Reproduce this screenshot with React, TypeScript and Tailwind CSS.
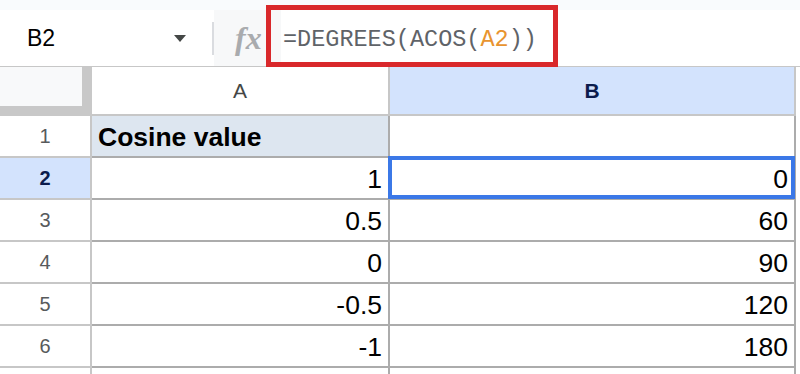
import React from 'react'

const rows = [
  { n: '1', a: 'Cosine value', b: '' },
  { n: '2', a: '1', b: '0' },
  { n: '3', a: '0.5', b: '60' },
  { n: '4', a: '0', b: '90' },
  { n: '5', a: '-0.5', b: '120' },
  { n: '6', a: '-1', b: '180' },
]

export default function App() {
  return (
    <div
      className="relative w-[800px] h-[374px] overflow-hidden bg-white"
      style={{ fontFamily: '"Liberation Sans", Arial, sans-serif' }}
    >
      {/* formula bar */}
      <div className="h-[10px] bg-[#f9fbfd]" />
      <div className="flex h-[57px] border-b border-[#c7c7c7]">
        <div className="flex w-[212px] items-center justify-between bg-white pl-[27px] pr-[26px]">
          <span className="text-[23px] text-black">B2</span>
          <span className="h-0 w-0 border-l-[6px] border-r-[6px] border-t-[7px] border-l-transparent border-r-transparent border-t-[#444746]" />
        </div>
        <div className="flex items-center bg-white">
          <div className="h-[33px] w-[2px] bg-[#dadce0]" />
        </div>
        <div className="flex w-[67px] items-center bg-[#f7f8f9] pl-[21px]">
          <span
            className="text-[32px] font-bold italic leading-none text-[#a9abae]"
            style={{ fontFamily: '"Liberation Serif", serif' }}
          >
            fx
          </span>
        </div>
        <div
          className="flex flex-1 items-center bg-white pl-[2px] pt-[4px] text-[23.5px] text-[#5f6368]"
          style={{ fontFamily: '"Liberation Mono", monospace' }}
        >
          =DEGREES(ACOS(<span className="text-[#e8942f]">A2</span>))
        </div>
      </div>

      {/* annotation box */}
      <div className="absolute left-[266px] top-[5px] h-[62px] w-[292px] border-[5px] border-[#d9282b]" />

      {/* grid */}
      <div className="grid grid-cols-[92px_298px_406px]">
        <div className="h-[49px] border-b-[10px] border-r-[10px] border-[#c8c8c8] bg-[#f8f9fa]" />
        <div className="flex h-[49px] items-center justify-center border-b-2 border-r-2 border-[#c7c7c7] bg-white text-[21px] text-[#444746]">
          A
        </div>
        <div className="flex h-[49px] items-center justify-center border-b-2 border-r-2 border-[#c7c7c7] bg-[#d3e3fd] text-[21px] font-bold text-[#0b1c4d]">
          B
        </div>

        {rows.map((r) => {
          const active = r.n === '2'
          return (
            <React.Fragment key={r.n}>
              <div
                className={
                  active
                    ? 'flex h-[42px] items-center justify-center border-b-2 border-r-2 border-[#c7c7c7] bg-[#d3e3fd] text-[20px] font-bold text-[#0b1c4d]'
                    : 'flex h-[42px] items-center justify-center border-b-2 border-r-2 border-[#c7c7c7] bg-white text-[20px] text-[#575a5c]'
                }
              >
                {r.n}
              </div>
              {r.n === '1' ? (
                <div className="flex h-[42px] items-end border-b-2 border-r-2 border-[#acacac] bg-[#dde6f0] pb-[4px] pl-[6px] text-[26.5px] font-bold leading-[30px] text-black">
                  {r.a}
                </div>
              ) : (
                <div className="flex h-[42px] items-end justify-end border-b-2 border-r-2 border-[#acacac] bg-white pb-[4px] pr-[6px] text-[26.5px] leading-[30px] text-black">
                  {r.a}
                </div>
              )}
              <div className="relative flex h-[42px] items-end justify-end border-b-2 border-r-2 border-[#acacac] bg-white pb-[4px] pr-[6px] text-[26.5px] leading-[30px] text-black">
                {r.b}
                {active && (
                  <div className="absolute -left-[2px] -top-[2px] -right-[1px] -bottom-[1px] border-[4px] border-[#3b78e7]" />
                )}
              </div>
            </React.Fragment>
          )
        })}

        <div className="h-[6px] border-r-2 border-[#c7c7c7]" />
        <div className="h-[6px] border-r-2 border-[#acacac]" />
        <div className="h-[6px] border-r-2 border-[#acacac]" />
      </div>
    </div>
  )
}
